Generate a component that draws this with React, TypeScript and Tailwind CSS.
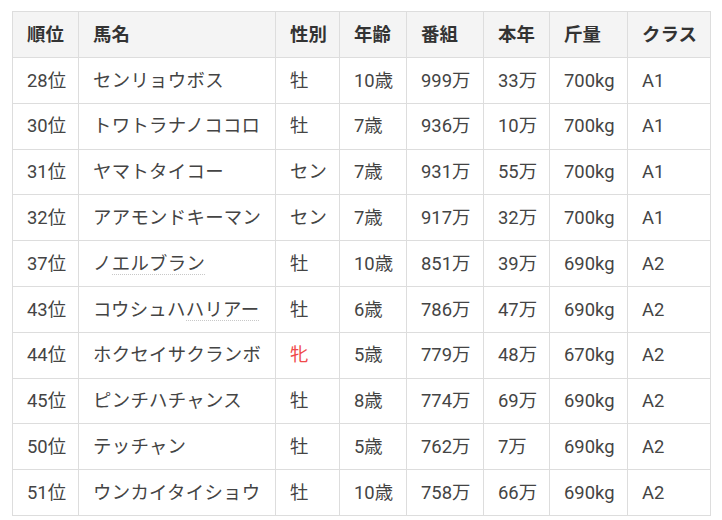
import React from "react";

type Row = {
  rank: string;
  name: React.ReactNode;
  sex: string;
  age: string;
  prize: string;
  year: string;
  weight: string;
  cls: string;
};

const U = ({ children }: { children: React.ReactNode }) => (
  <span className="border-b border-dotted border-[#c8c8c8]">{children}</span>
);

const rows: Row[] = [
  { rank: "28位", name: "センリョウボス", sex: "牡", age: "10歳", prize: "999万", year: "33万", weight: "700kg", cls: "A1" },
  { rank: "30位", name: "トワトラナノココロ", sex: "牡", age: "7歳", prize: "936万", year: "10万", weight: "700kg", cls: "A1" },
  { rank: "31位", name: "ヤマトタイコー", sex: "セン", age: "7歳", prize: "931万", year: "55万", weight: "700kg", cls: "A1" },
  { rank: "32位", name: "アアモンドキーマン", sex: "セン", age: "7歳", prize: "917万", year: "32万", weight: "700kg", cls: "A1" },
  { rank: "37位", name: <>ノ<U>エルブラン</U></>, sex: "牡", age: "10歳", prize: "851万", year: "39万", weight: "690kg", cls: "A2" },
  { rank: "43位", name: <>コウシュハ<U>ハリアー</U></>, sex: "牡", age: "6歳", prize: "786万", year: "47万", weight: "690kg", cls: "A2" },
  { rank: "44位", name: "ホクセイサクランボ", sex: "牝", age: "5歳", prize: "779万", year: "48万", weight: "670kg", cls: "A2" },
  { rank: "45位", name: "ピンチハチャンス", sex: "牡", age: "8歳", prize: "774万", year: "69万", weight: "690kg", cls: "A2" },
  { rank: "50位", name: "テッチャン", sex: "牡", age: "5歳", prize: "762万", year: "7万", weight: "690kg", cls: "A2" },
  { rank: "51位", name: "ウンカイタイショウ", sex: "牡", age: "10歳", prize: "758万", year: "66万", weight: "690kg", cls: "A2" },
];

const widths = ["w-[66px]", "w-[197px]", "w-[64px]", "w-[67px]", "w-[77px]", "w-[66px]", "w-[78px]", "w-[83px]"];
const heads = ["順位", "馬名", "性別", "年齢", "番組", "本年", "斤量", "クラス"];

export default function App() {
  return (
    <div
      className="bg-white w-[722px] h-[520px] pl-[12px] pt-[11px]"
      style={{ fontFamily: 'Roboto, "Noto Sans CJK JP", sans-serif' }}
    >
      <table className="border-collapse table-fixed w-[698px] text-[18.4px] text-[#444]">
        <colgroup>
          {widths.map((w, i) => (
            <col key={i} className={w} />
          ))}
        </colgroup>
        <thead>
          <tr className="h-[46px] bg-[#f4f4f4]">
            {heads.map((h) => (
              <th key={h} className="border border-[#dddddd] px-[14px] text-left font-bold text-[#333] whitespace-nowrap">
                {h}
              </th>
            ))}
          </tr>
        </thead>
        <tbody>
          {rows.map((r) => (
            <tr key={r.rank} className="h-[45.8px]">
              <td className="border border-[#dddddd] px-[14px] whitespace-nowrap">{r.rank}</td>
              <td className="border border-[#dddddd] px-[14px] whitespace-nowrap tracking-[0.3px]">{r.name}</td>
              <td className={`border border-[#dddddd] px-[14px] whitespace-nowrap ${r.sex === "牝" ? "text-[#f04a4a]" : ""}`}>{r.sex}</td>
              <td className="border border-[#dddddd] px-[14px] whitespace-nowrap">{r.age}</td>
              <td className="border border-[#dddddd] px-[14px] whitespace-nowrap">{r.prize}</td>
              <td className="border border-[#dddddd] px-[14px] whitespace-nowrap">{r.year}</td>
              <td className="border border-[#dddddd] px-[14px] whitespace-nowrap">{r.weight}</td>
              <td className="border border-[#dddddd] px-[14px] whitespace-nowrap">{r.cls}</td>
            </tr>
          ))}
        </tbody>
      </table>
    </div>
  );
}
